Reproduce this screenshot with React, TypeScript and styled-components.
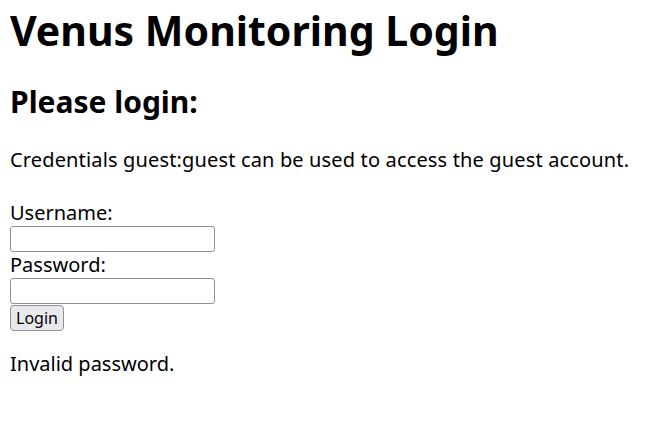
import styled, { createGlobalStyle } from 'styled-components';

const GlobalStyle = createGlobalStyle`
  body {
    margin: 10px;
    background: #ffffff;
    color: #000000;
    font-family: "Noto Sans", "Open Sans", sans-serif;
    font-size: 20px;
    line-height: 26px;
  }
`;

const Title = styled.h1`
  font-size: 41px;
  font-weight: 700;
  line-height: 40px;
  margin: 0 0 34px;
`;

const SubTitle = styled.h2`
  font-size: 30px;
  font-weight: 700;
  line-height: 36px;
  margin: 0 0 27px;
`;

const Note = styled.p`
  margin: 0 0 27px;
  letter-spacing: 0.15px;
`;

const Form = styled.form`
  display: flex;
  flex-direction: column;
  align-items: flex-start;
`;

const Label = styled.label`
  display: block;
  height: 26px;
`;

const Field = styled.input`
  box-sizing: border-box;
  width: 205px;
  height: 26px;
  margin: 0;
  border: 1px solid #8f8f9d;
  border-radius: 3px;
  background: #ffffff;
`;

const Button = styled.button`
  box-sizing: border-box;
  height: 26px;
  padding: 0 5px;
  margin: 1px 0 0;
  font-family: "Noto Sans", "Open Sans", sans-serif;
  font-size: 16px;
  line-height: 22px;
  color: #000000;
  background: #e9e9ed;
  border: 1px solid #8f8f9d;
  border-radius: 4px;
`;

const Message = styled.p`
  margin: 20px 0 0;
`;

export default function App() {
  return (
    <>
      <GlobalStyle />
      <Title>Venus Monitoring Login</Title>
      <SubTitle>Please login:</SubTitle>
      <Note>Credentials guest:guest can be used to access the guest account.</Note>
      <Form onSubmit={(e) => e.preventDefault()}>
        <Label htmlFor="username">Username:</Label>
        <Field id="username" type="text" />
        <Label htmlFor="password">Password:</Label>
        <Field id="password" type="password" />
        <Button type="submit">Login</Button>
      </Form>
      <Message>Invalid password.</Message>
    </>
  );
}
